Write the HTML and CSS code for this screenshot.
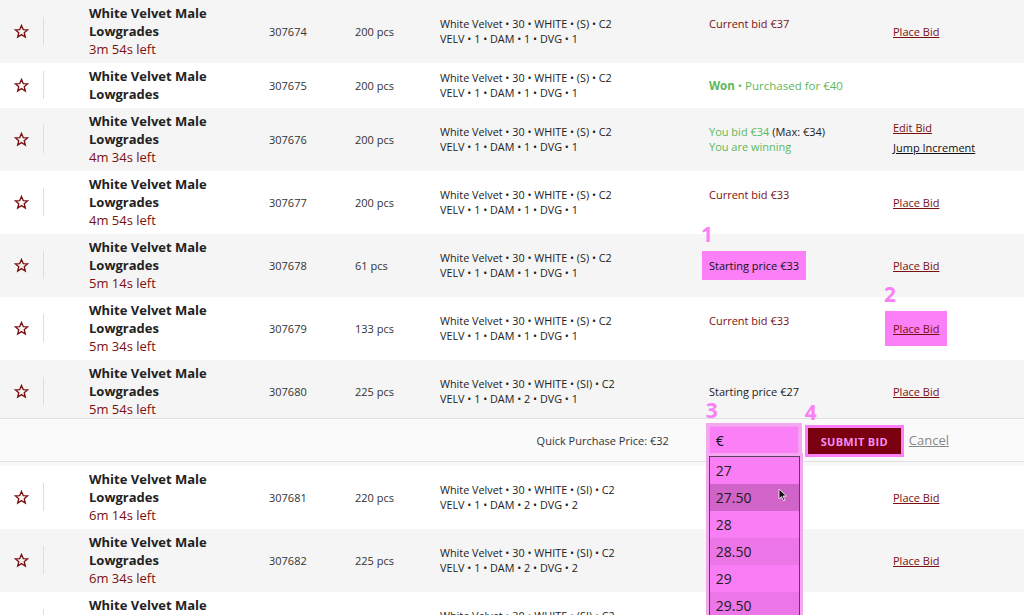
FILE: index.html
```html
<!DOCTYPE html>
<html lang="en">

<head>
    <meta charset="UTF-8">
    <meta name="viewport" content="width=device-width, initial-scale=1.0">
    <title>Auction lots</title>
    <link rel="stylesheet" href="styles.css">
</head>

<body>
    <div class="lots">
        <div class="row grey">
            <div class="fav"><svg class="star" viewBox="0 0 16 16"><polygon points="8,1.5 9.9,6 14.6,6.2 10.9,9.2 12.1,13.9 8,11.3 3.9,13.9 5.1,9.2 1.4,6.2 6.1,6" /></svg></div>
            <div></div>
            <div class="name"><b>White Velvet Male Lowgrades</b><span class="time">3m 54s left</span></div>
            <div class="num">307674</div>
            <div class="num">200 pcs</div>
            <div class="desc">White Velvet • 30 • WHITE • (S) • C2<br>VELV • 1 • DAM • 1 • DVG • 1</div>
            <div class="status red top">Current bid €37</div>
            <div class="action"><a href="#">Place Bid</a></div>
        </div>
        <div class="row">
            <div class="fav"><svg class="star" viewBox="0 0 16 16"><polygon points="8,1.5 9.9,6 14.6,6.2 10.9,9.2 12.1,13.9 8,11.3 3.9,13.9 5.1,9.2 1.4,6.2 6.1,6" /></svg></div>
            <div></div>
            <div class="name"><b>White Velvet Male Lowgrades</b></div>
            <div class="num">307675</div>
            <div class="num">200 pcs</div>
            <div class="desc">White Velvet • 30 • WHITE • (S) • C2<br>VELV • 1 • DAM • 1 • DVG • 1</div>
            <div class="status green big"><b>Won</b> • Purchased for €40</div>
            <div class="action"></div>
        </div>
        <div class="row grey">
            <div class="fav"><svg class="star" viewBox="0 0 16 16"><polygon points="8,1.5 9.9,6 14.6,6.2 10.9,9.2 12.1,13.9 8,11.3 3.9,13.9 5.1,9.2 1.4,6.2 6.1,6" /></svg></div>
            <div></div>
            <div class="name"><b>White Velvet Male Lowgrades</b><span class="time">4m 34s left</span></div>
            <div class="num">307676</div>
            <div class="num">200 pcs</div>
            <div class="desc">White Velvet • 30 • WHITE • (S) • C2<br>VELV • 1 • DAM • 1 • DVG • 1</div>
            <div class="status"><span class="green">You bid €34</span> (Max: €34)<br><span class="green">You are winning</span></div>
            <div class="action stack"><a href="#">Edit Bid</a><a href="#" class="dark">Jump Increment</a></div>
        </div>
        <div class="row">
            <div class="fav"><svg class="star" viewBox="0 0 16 16"><polygon points="8,1.5 9.9,6 14.6,6.2 10.9,9.2 12.1,13.9 8,11.3 3.9,13.9 5.1,9.2 1.4,6.2 6.1,6" /></svg></div>
            <div></div>
            <div class="name"><b>White Velvet Male Lowgrades</b><span class="time">4m 54s left</span></div>
            <div class="num">307677</div>
            <div class="num">200 pcs</div>
            <div class="desc">White Velvet • 30 • WHITE • (S) • C2<br>VELV • 1 • DAM • 1 • DVG • 1</div>
            <div class="status red top">Current bid €33</div>
            <div class="action"><a href="#">Place Bid</a></div>
        </div>
        <div class="row grey">
            <div class="fav"><svg class="star" viewBox="0 0 16 16"><polygon points="8,1.5 9.9,6 14.6,6.2 10.9,9.2 12.1,13.9 8,11.3 3.9,13.9 5.1,9.2 1.4,6.2 6.1,6" /></svg></div>
            <div></div>
            <div class="name"><b>White Velvet Male Lowgrades</b><span class="time">5m 14s left</span></div>
            <div class="num">307678</div>
            <div class="num">61 pcs</div>
            <div class="desc">White Velvet • 30 • WHITE • (S) • C2<br>VELV • 1 • DAM • 1 • DVG • 1</div>
            <div class="status"><span class="mark price-mark"><i class="step">1</i>Starting price €33</span></div>
            <div class="action"><a href="#">Place Bid</a></div>
        </div>
        <div class="row">
            <div class="fav"><svg class="star" viewBox="0 0 16 16"><polygon points="8,1.5 9.9,6 14.6,6.2 10.9,9.2 12.1,13.9 8,11.3 3.9,13.9 5.1,9.2 1.4,6.2 6.1,6" /></svg></div>
            <div></div>
            <div class="name"><b>White Velvet Male Lowgrades</b><span class="time">5m 34s left</span></div>
            <div class="num">307679</div>
            <div class="num">133 pcs</div>
            <div class="desc">White Velvet • 30 • WHITE • (S) • C2<br>VELV • 1 • DAM • 1 • DVG • 1</div>
            <div class="status red top">Current bid €33</div>
            <div class="action"><span class="mark link-mark"><i class="step">2</i><a href="#">Place Bid</a></span></div>
        </div>
        <div class="row grey open">
            <div class="fav"><svg class="star" viewBox="0 0 16 16"><polygon points="8,1.5 9.9,6 14.6,6.2 10.9,9.2 12.1,13.9 8,11.3 3.9,13.9 5.1,9.2 1.4,6.2 6.1,6" /></svg></div>
            <div></div>
            <div class="name"><b>White Velvet Male Lowgrades</b><span class="time">5m 54s left</span></div>
            <div class="num">307680</div>
            <div class="num">225 pcs</div>
            <div class="desc">White Velvet • 30 • WHITE • (SI) • C2<br>VELV • 1 • DAM • 2 • DVG • 1</div>
            <div class="status">Starting price €27</div>
            <div class="action"><a href="#">Place Bid</a></div>
        </div>

        <div class="quick">
            <span class="quick-price">Quick Purchase Price: €32</span>
            <div class="bid-field">
                <i class="step">3</i>
                <div class="bid-input">€</div>
                <ul class="bid-list">
                    <li>27</li>
                    <li class="hover">27.50<svg class="cursor" viewBox="0 0 10 14"><polygon points="1,1 1,11 3.5,8.6 5.5,12.8 7,12.1 5.1,8 8.4,8" /></svg></li>
                    <li>28</li>
                    <li class="alt">28.50</li>
                    <li>29</li>
                    <li class="alt">29.50</li>
                </ul>
            </div>
            <div class="submit-wrap">
                <i class="step">4</i>
                <button type="button" class="submit">SUBMIT BID</button>
            </div>
            <a href="#" class="cancel">Cancel</a>
        </div>

        <div class="row after-quick">
            <div class="fav"><svg class="star" viewBox="0 0 16 16"><polygon points="8,1.5 9.9,6 14.6,6.2 10.9,9.2 12.1,13.9 8,11.3 3.9,13.9 5.1,9.2 1.4,6.2 6.1,6" /></svg></div>
            <div></div>
            <div class="name"><b>White Velvet Male Lowgrades</b><span class="time">6m 14s left</span></div>
            <div class="num">307681</div>
            <div class="num">220 pcs</div>
            <div class="desc">White Velvet • 30 • WHITE • (SI) • C2<br>VELV • 1 • DAM • 2 • DVG • 2</div>
            <div class="status"></div>
            <div class="action"><a href="#">Place Bid</a></div>
        </div>
        <div class="row grey">
            <div class="fav"><svg class="star" viewBox="0 0 16 16"><polygon points="8,1.5 9.9,6 14.6,6.2 10.9,9.2 12.1,13.9 8,11.3 3.9,13.9 5.1,9.2 1.4,6.2 6.1,6" /></svg></div>
            <div></div>
            <div class="name"><b>White Velvet Male Lowgrades</b><span class="time">6m 34s left</span></div>
            <div class="num">307682</div>
            <div class="num">225 pcs</div>
            <div class="desc">White Velvet • 30 • WHITE • (SI) • C2<br>VELV • 1 • DAM • 2 • DVG • 2</div>
            <div class="status"></div>
            <div class="action"><a href="#">Place Bid</a></div>
        </div>
        <div class="row">
            <div class="fav"><svg class="star" viewBox="0 0 16 16"><polygon points="8,1.5 9.9,6 14.6,6.2 10.9,9.2 12.1,13.9 8,11.3 3.9,13.9 5.1,9.2 1.4,6.2 6.1,6" /></svg></div>
            <div></div>
            <div class="name"><b>White Velvet Male Lowgrades</b><span class="time">6m 54s left</span></div>
            <div class="num">307683</div>
            <div class="num">225 pcs</div>
            <div class="desc">White Velvet • 30 • WHITE • (SI) • C2<br>VELV • 1 • DAM • 2 • DVG • 2</div>
            <div class="status"></div>
            <div class="action"><a href="#">Place Bid</a></div>
        </div>
    </div>
</body>

</html>
```

FILE: styles.css
```css
body {
    margin: 0;
    font-family: "Open Sans", "Liberation Sans", sans-serif;
    color: #222;
    background-color: #fff;
    overflow: hidden;
}

.row {
    display: grid;
    grid-template-columns: 44px 45px 180px 86px 85px 269px 184px 1fr;
    align-items: center;
    padding: 4px 0 5px;
    background-color: #fff;
}

.row.grey {
    background-color: #f5f5f5;
}

.row.open {
    padding-bottom: 0;
    height: 58px;
    box-sizing: border-box;
}

.row.after-quick {
    border-top: 4px solid #f8f8f8;
}

.fav {
    display: flex;
    justify-content: center;
    height: 28px;
    align-items: center;
    border-right: 1px solid #ddd;
}

.star {
    width: 15px;
    height: 15px;
    fill: none;
    stroke: #7a1010;
    stroke-width: 1.4;
    stroke-linejoin: miter;
}

.name {
    font-size: 13px;
    line-height: 18px;
}

.name b {
    display: block;
    color: #222;
}

.time {
    display: block;
    color: #7a1010;
}

.num {
    font-size: 11px;
    color: #333;
}

.desc {
    font-size: 10.8px;
    line-height: 15px;
    color: #222;
}

.status {
    font-size: 11px;
    line-height: 15px;
    color: #222;
}

.status.top {
    padding-bottom: 15px;
}

.status.big {
    font-size: 11.5px;
}

.red {
    color: #7a1010;
}

.green {
    color: #5cb85c;
}

.action {
    font-size: 11px;
}

.action a {
    color: #7a1010;
}

.action.stack {
    display: flex;
    flex-direction: column;
    gap: 5px;
    padding-bottom: 4px;
}

.action a.dark {
    color: #111;
}

.mark {
    position: relative;
    display: inline-block;
    background-color: #fb7ff6;
}

.price-mark {
    padding: 7px 7px;
    margin-left: -7px;
    color: #111;
}

.link-mark {
    padding: 10px 8px;
    margin-left: -8px;
}

.step {
    position: absolute;
    left: -1px;
    top: -29px;
    font-style: normal;
    font-weight: bold;
    font-size: 21px;
    line-height: 24px;
    color: #fb7ff6;
}

.quick {
    display: flex;
    justify-content: flex-end;
    align-items: center;
    height: 44px;
    box-sizing: border-box;
    padding-right: 75px;
    background-color: #fafafa;
    border-top: 1px solid #e0e0e0;
    border-bottom: 1px solid #e0e0e0;
}

.quick-price {
    font-size: 11px;
    color: #333;
    margin-right: 37px;
}

.bid-field {
    position: relative;
    padding: 3px;
    background-color: #f4a8f0;
    height: 36px;
    box-sizing: border-box;
    margin-top: 2px;
}

.bid-field .step,
.submit-wrap .step {
    top: -25px;
    left: 0;
}

.bid-input {
    width: 90px;
    height: 30px;
    box-sizing: border-box;
    padding: 0 6px;
    background-color: #fb80f7;
    border: 1px solid #f49cf0;
    font-size: 14px;
    line-height: 28px;
    color: #111;
}

.bid-list {
    position: absolute;
    top: 33px;
    left: 3px;
    width: 91px;
    margin: 0;
    padding: 0;
    list-style: none;
    background-color: #f97ef5;
    border: 1px solid #5c3d5a;
    box-sizing: border-box;
    box-shadow: 0 0 0 3px #f4a8f0;
}

.bid-list li {
    position: relative;
    height: 27px;
    padding: 0 6px;
    font-size: 14px;
    line-height: 27px;
    color: #1c1c1c;
}

.bid-list li.alt {
    background-color: #ec75e7;
}

.bid-list li.hover {
    background-color: #d064c8;
}

.cursor {
    position: absolute;
    left: 68px;
    top: 4px;
    width: 10px;
    height: 14px;
    fill: #111;
    stroke: #fff;
    stroke-width: 0.8;
}

.submit-wrap {
    position: relative;
    margin-left: 3px;
    margin-top: 2px;
}

.submit {
    display: block;
    width: 99px;
    height: 32px;
    border: 3px solid #fb7ff6;
    background-color: #7a0010;
    color: #f58df0;
    font-family: "Open Sans", "Liberation Sans", sans-serif;
    font-weight: bold;
    font-size: 11px;
    letter-spacing: 0.3px;
    cursor: pointer;
}

.cancel {
    margin-left: 5px;
    font-size: 13px;
    color: #888;
}
```
